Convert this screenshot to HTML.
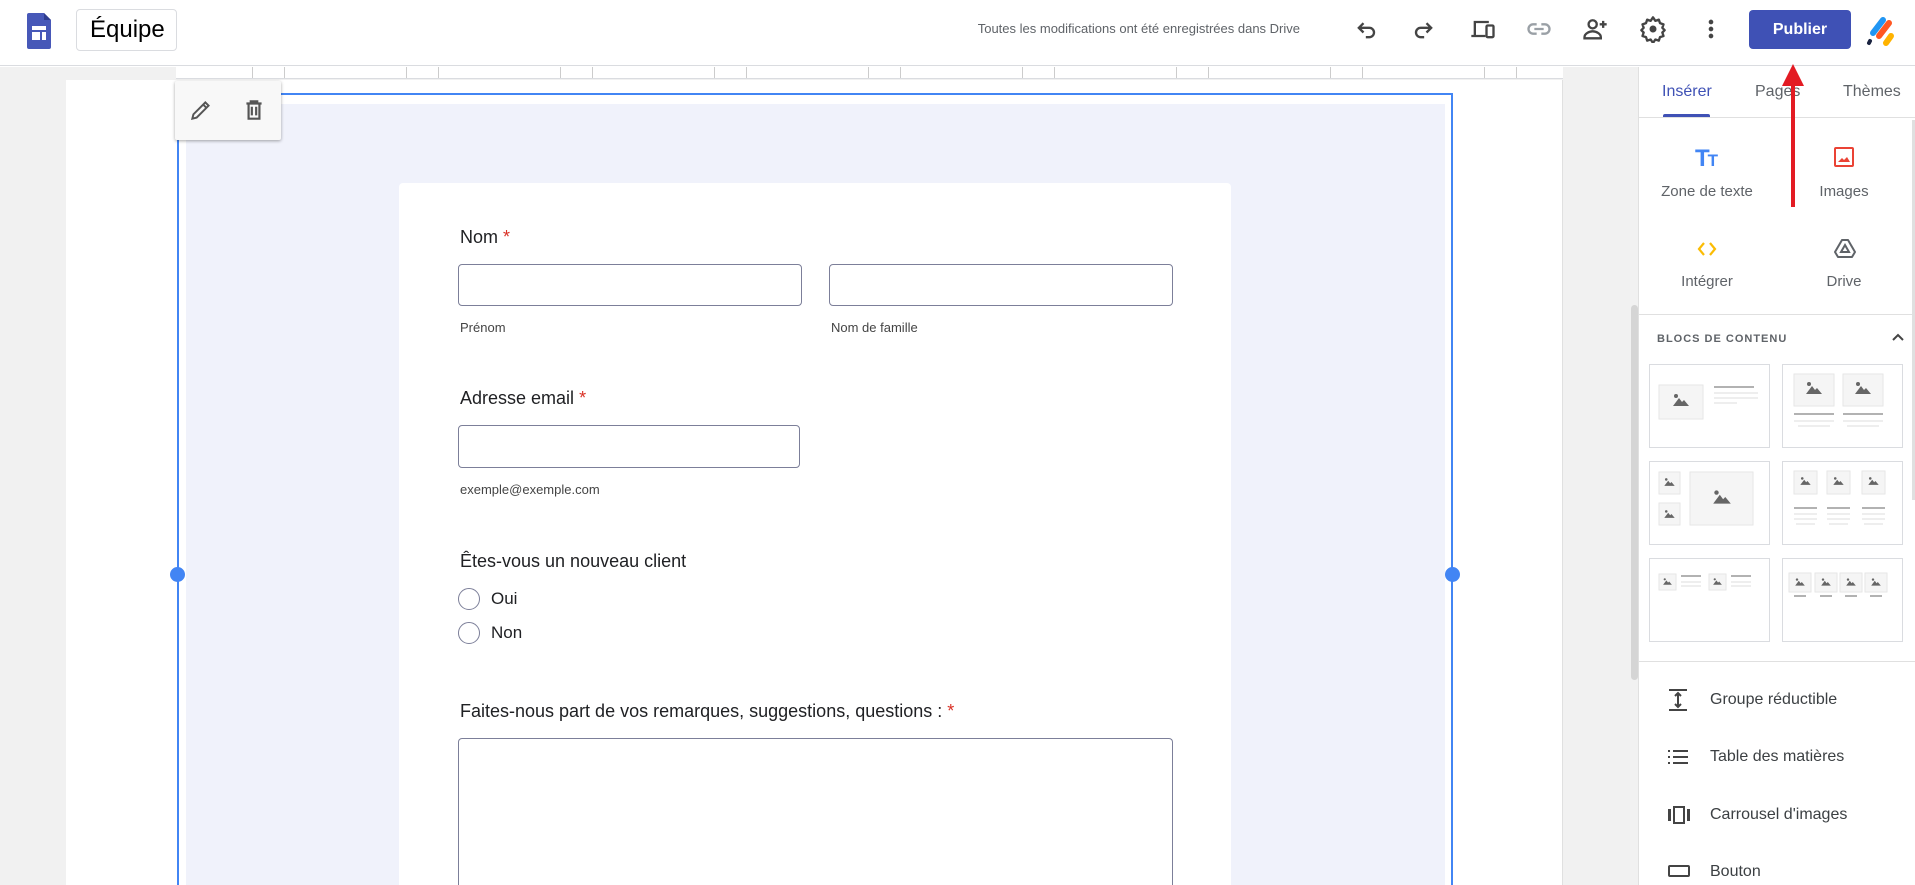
<!DOCTYPE html>
<html><head><meta charset="utf-8"><style>
*{margin:0;padding:0;box-sizing:border-box}
html,body{width:1915px;height:885px;overflow:hidden}
body{background:#fff;font-family:"Liberation Sans",Arial,sans-serif;position:relative}
.a{position:absolute}
.lbl{position:absolute;font-size:18px;color:#202124;white-space:nowrap}
.req{color:#d93025}
.inp{position:absolute;border:1px solid #7c7f99;border-radius:4px;background:#fff}
.sub{position:absolute;font-size:13px;color:#444;white-space:nowrap}
.ic{position:absolute;width:28px;height:28px}
.tab{position:absolute;top:83px;font-size:16px;color:#5f6368}
.card{position:absolute;border:1px solid #dadce0;background:#fff}
.it{position:absolute;left:1710px;font-size:16px;color:#3c4043;white-space:nowrap}
.ins{position:absolute;font-size:15px;color:#5f6368;white-space:nowrap;transform:translateX(-50%)}
</style></head><body>
<!-- header -->
<div class="a" style="left:0;top:0;width:1915px;height:66px;background:#fff;border-bottom:1px solid #dadce0"></div>
<svg class="a" style="left:27px;top:13px" width="24" height="36" viewBox="0 0 24 36"><path d="M2 0h15l7 7v27a2 2 0 0 1-2 2H2a2 2 0 0 1-2-2V2a2 2 0 0 1 2-2z" fill="#4758b8"/><path d="M17 0l7 7h-7z" fill="#2f3d8f"/><rect x="5" y="13" width="14" height="4" fill="#fff"/><rect x="5" y="19" width="8" height="8" fill="#fff"/><rect x="15" y="19" width="4" height="8" fill="#fff"/></svg>
<div class="a" style="left:76px;top:9px;width:101px;height:42px;border:1px solid #dadce0;border-radius:4px;font-size:24px;line-height:40px;padding-left:13px;color:#000">Équipe</div>
<div class="a" style="left:960px;top:21px;width:340px;text-align:right;font-size:13px;color:#5f6368">Toutes les modifications ont été enregistrées dans Drive</div>
<svg class="ic" style="left:1353px;top:15px" viewBox="0 0 24 24"><path d="M9 7L5 11l4 4M5 11h9a4 4 0 0 1 0 8h-3" fill="none" stroke="#444" stroke-width="2"/></svg>
<svg class="ic" style="left:1409px;top:15px" viewBox="0 0 24 24"><path d="M15 7l4 4-4 4M19 11h-9a4 4 0 0 0 0 8h3" fill="none" stroke="#444" stroke-width="2"/></svg>
<svg class="ic" style="left:1469px;top:15px" viewBox="0 0 24 24"><path d="M4 5h13v2H6v10H4z M2 17h12v2H2z" fill="#444"/><rect x="15" y="9" width="6" height="10" rx="1" fill="none" stroke="#444" stroke-width="2"/></svg>
<svg class="ic" style="left:1525px;top:15px" viewBox="0 0 24 24"><path d="M10 8H7a4 4 0 0 0 0 8h3M14 8h3a4 4 0 0 1 0 8h-3M8 12h8" fill="none" stroke="#9aa0a6" stroke-width="2"/></svg>
<svg class="ic" style="left:1581px;top:15px" viewBox="0 0 24 24"><circle cx="10" cy="8" r="3.5" fill="none" stroke="#444" stroke-width="2"/><path d="M3 20v-1c0-3 4-5 7-5s7 2 7 5v1z" fill="none" stroke="#444" stroke-width="2"/><path d="M19 5v6M16 8h6" stroke="#444" stroke-width="2"/></svg>
<svg class="ic" style="left:1639px;top:15px" viewBox="0 0 24 24"><path d="M12 2l2 3 3-1 1 3 3 1-1 3 2 2-2 2 1 3-3 1-1 3-3-1-2 3-2-3-3 1-1-3-3-1 1-3-2-2 2-2-1-3 3-1 1-3 3 1z" fill="none" stroke="#444" stroke-width="2" stroke-linejoin="round"/><circle cx="12" cy="12" r="3" fill="#444"/></svg>
<svg class="ic" style="left:1697px;top:15px" viewBox="0 0 24 24"><circle cx="12" cy="6" r="2" fill="#444"/><circle cx="12" cy="12" r="2" fill="#444"/><circle cx="12" cy="18" r="2" fill="#444"/></svg>
<div class="a" style="left:1749px;top:10px;width:102px;height:39px;background:#3f51b5;border-radius:4px;color:#fff;font-weight:bold;font-size:16px;line-height:39px;text-align:center">Publier</div>
<svg class="a" style="left:1862px;top:14px" width="34" height="34" viewBox="0 0 34 34"><path d="M11 19L21 6" stroke="#2196f3" stroke-width="6" stroke-linecap="round"/><path d="M17 22L27 9" stroke="#ff5722" stroke-width="6" stroke-linecap="round"/><path d="M24 29L29 22" stroke="#ffb300" stroke-width="6" stroke-linecap="round"/><path d="M7 29L8 27" stroke="#1a2340" stroke-width="4" stroke-linecap="round"/></svg>
<!-- canvas -->
<div class="a" style="left:0;top:67px;width:1638px;height:818px;background:#f1f1f1"></div>
<div class="a" style="left:176px;top:67px;width:1387px;height:12px;background:#fff;border-bottom:1px solid #dadce0;background-image:repeating-linear-gradient(90deg,transparent 0,transparent 76px,#ccc 76px,#ccc 77px,transparent 77px,transparent 108px,#ccc 108px,#ccc 109px,transparent 109px,transparent 154px);"></div>
<div class="a" style="left:66px;top:80px;width:1497px;height:805px;background:#fff;border-right:1px solid #e0e0e0"></div>
<div class="a" style="left:177px;top:93px;width:1276px;height:792px;border:2px solid #4285f4;border-bottom:none"></div>
<div class="a" style="left:186px;top:104px;width:1259px;height:781px;background:#f0f2fb"></div>
<div class="a" style="left:175px;top:81px;width:106px;height:59px;background:#f8f8f8;box-shadow:0 1px 3px rgba(0,0,0,.35);border-radius:2px"></div>
<svg class="a" style="left:188px;top:97px" width="26" height="26" viewBox="0 0 24 24"><path d="M4 20l1-4L16 5l3 3L8 19z M14 7l3 3" fill="none" stroke="#555" stroke-width="1.8"/></svg>
<svg class="a" style="left:241px;top:97px" width="26" height="26" viewBox="0 0 24 24"><path d="M5 6h14M9 6V4h6v2M7 6v14h10V6M10 9v8M14 9v8" fill="none" stroke="#555" stroke-width="2"/></svg>
<div class="a" style="left:170px;top:567px;width:15px;height:15px;border-radius:50%;background:#4285f4"></div>
<div class="a" style="left:1445px;top:567px;width:15px;height:15px;border-radius:50%;background:#4285f4"></div>
<!-- form -->
<div class="a" style="left:399px;top:183px;width:832px;height:702px;background:#fff;border-radius:4px 4px 0 0"></div>
<div class="lbl" style="left:460px;top:227px">Nom <span class="req">*</span></div>
<div class="inp" style="left:458px;top:264px;width:344px;height:42px"></div>
<div class="inp" style="left:829px;top:264px;width:344px;height:42px"></div>
<div class="sub" style="left:460px;top:320px">Prénom</div>
<div class="sub" style="left:831px;top:320px">Nom de famille</div>
<div class="lbl" style="left:460px;top:388px">Adresse email <span class="req">*</span></div>
<div class="inp" style="left:458px;top:425px;width:342px;height:43px"></div>
<div class="sub" style="left:460px;top:482px">exemple@exemple.com</div>
<div class="lbl" style="left:460px;top:551px">Êtes-vous un nouveau client</div>
<div class="a" style="left:458px;top:588px;width:22px;height:22px;border:1.5px solid #7c7f99;border-radius:50%"></div>
<div class="lbl" style="left:491px;top:589px;font-size:17px">Oui</div>
<div class="a" style="left:458px;top:622px;width:22px;height:22px;border:1.5px solid #7c7f99;border-radius:50%"></div>
<div class="lbl" style="left:491px;top:623px;font-size:17px">Non</div>
<div class="lbl" style="left:460px;top:701px">Faites-nous part de vos remarques, suggestions, questions : <span class="req">*</span></div>
<div class="inp" style="left:458px;top:738px;width:715px;height:147px;border-bottom:none;border-radius:4px 4px 0 0"></div>
<!-- panel -->
<div class="a" style="left:1631px;top:305px;width:7px;height:375px;background:#d5d5d5;border-radius:4px"></div>
<div class="a" style="left:1638px;top:67px;width:277px;height:818px;background:#fff;border-left:1px solid #e0e0e0"></div>
<div class="tab" style="left:1662px;color:#3f51b5">Insérer</div>
<div class="tab" style="left:1755px">Pages</div>
<div class="tab" style="left:1843px">Thèmes</div>
<div class="a" style="left:1663px;top:114px;width:47px;height:3px;background:#3f51b5;border-radius:2px 2px 0 0"></div>
<div class="a" style="left:1638px;top:117px;width:277px;height:1px;background:#e0e0e0"></div>
<div class="a" style="left:1912px;top:120px;width:3px;height:380px;background:#e0e0e0"></div>
<div class="a" style="left:1695px;top:145px;font-size:24px;font-weight:bold;color:#4285f4;letter-spacing:-2px">T<span style="font-size:17px">T</span></div>
<svg class="a" style="left:1833px;top:146px" width="22" height="22" viewBox="0 0 22 22"><rect x="2" y="2" width="18" height="18" rx="1" fill="none" stroke="#ea4335" stroke-width="2"/><path d="M5 16l4-4 2 2 3-3 3 5z" fill="#ea4335"/></svg>
<div class="ins" style="left:1707px;top:183px">Zone de texte</div>
<div class="ins" style="left:1844px;top:183px">Images</div>
<svg class="a" style="left:1696px;top:238px" width="22" height="22" viewBox="0 0 22 22"><path d="M8 5L3 11l5 6M14 5l5 6-5 6" fill="none" stroke="#fbbc04" stroke-width="2.2"/></svg>
<svg class="a" style="left:1833px;top:237px" width="24" height="24" viewBox="0 0 24 24"><path d="M9 3h6l7 12-3 5H5l-3-5z" fill="none" stroke="#5f6368" stroke-width="2" stroke-linejoin="round"/><path d="M12 8l4 7H8z" fill="none" stroke="#5f6368" stroke-width="2"/></svg>
<div class="ins" style="left:1707px;top:273px">Intégrer</div>
<div class="ins" style="left:1844px;top:273px">Drive</div>
<div class="a" style="left:1638px;top:314px;width:277px;height:1px;background:#e0e0e0"></div>
<div class="a" style="left:1657px;top:333px;font-size:11px;letter-spacing:1px;color:#5f6368;font-weight:bold">BLOCS DE CONTENU</div>
<svg class="a" style="left:1891px;top:332px" width="14" height="10" viewBox="0 0 14 10"><path d="M2 8l5-5 5 5" fill="none" stroke="#444" stroke-width="2"/></svg>
<div class="card" style="left:1649px;top:364px;width:121px;height:84px"></div>
<div class="card" style="left:1782px;top:364px;width:121px;height:84px"></div>
<div class="card" style="left:1649px;top:461px;width:121px;height:84px"></div>
<div class="card" style="left:1782px;top:461px;width:121px;height:84px"></div>
<div class="card" style="left:1649px;top:558px;width:121px;height:84px"></div>
<div class="card" style="left:1782px;top:558px;width:121px;height:84px"></div>
<svg class="a" style="left:1649px;top:364px" width="254" height="278" viewBox="0 0 254 278">
<defs><symbol id="m" viewBox="0 0 20 14"><circle cx="5" cy="3" r="2" fill="#666"/><path d="M2 13l6-8 3 4 2-2 5 6z" fill="#666"/></symbol></defs>
<g fill="#f5f5f5" stroke="#e6e6e6">
<rect x="10" y="21" width="44" height="34"/>
<rect x="145" y="10" width="40" height="32"/><rect x="194" y="10" width="40" height="32"/>
<rect x="10" y="108" width="21" height="22"/><rect x="10" y="139" width="21" height="22"/><rect x="41" y="108" width="63" height="53"/>
<rect x="145" y="107" width="23" height="23"/><rect x="178" y="107" width="23" height="23"/><rect x="213" y="107" width="23" height="23"/>
<rect x="10" y="210" width="17" height="16"/><rect x="60" y="210" width="17" height="16"/>
<rect x="140" y="209" width="22" height="19"/><rect x="166" y="209" width="22" height="19"/><rect x="191" y="209" width="22" height="19"/><rect x="216" y="209" width="22" height="19"/>
</g>
<use href="#m" x="22" y="29" width="20" height="14"/>
<use href="#m" x="155" y="17" width="20" height="14"/><use href="#m" x="204" y="17" width="20" height="14"/>
<use href="#m" x="14" y="113" width="13" height="10"/><use href="#m" x="14" y="145" width="13" height="10"/><use href="#m" x="62" y="125" width="22" height="16"/>
<use href="#m" x="150" y="112" width="13" height="10"/><use href="#m" x="183" y="112" width="13" height="10"/><use href="#m" x="218" y="112" width="13" height="10"/>
<use href="#m" x="13" y="213" width="11" height="9"/><use href="#m" x="63" y="213" width="11" height="9"/>
<use href="#m" x="145" y="213" width="12" height="10"/><use href="#m" x="171" y="213" width="12" height="10"/><use href="#m" x="196" y="213" width="12" height="10"/><use href="#m" x="221" y="213" width="12" height="10"/>
<g stroke="#999" stroke-width="1.5"><path d="M65 23h40M145 50h40M194 50h40M145 144h23M178 144h23M213 144h23M32 212h20M82 212h20M145 232h12M171 232h12M196 232h12M221 232h12"/></g>
<g stroke="#ddd" stroke-width="1"><path d="M65 29h44M65 34h44M65 39h23M145 57h40M149 62h32M194 57h40M198 62h32M145 150h23M145 155h23M147 160h19M178 150h23M178 155h23M180 160h19M213 150h23M213 155h23M215 160h19M32 218h20M32 222h20M82 218h20M82 222h20"/></g>
</svg>
<div class="a" style="left:1638px;top:661px;width:277px;height:1px;background:#e0e0e0"></div>
<svg class="a" style="left:1667px;top:688px" width="22" height="24" viewBox="0 0 22 24"><path d="M2 2h18M2 22h18M11 5v14M8 8l3-3 3 3M8 16l3 3 3-3" fill="none" stroke="#444" stroke-width="2"/></svg>
<div class="it" style="top:691px">Groupe réductible</div>
<svg class="a" style="left:1667px;top:747px" width="22" height="20" viewBox="0 0 22 20"><path d="M1 4h2M1 10h2M1 16h2M6 4h15M6 10h15M6 16h15" stroke="#444" stroke-width="2"/></svg>
<div class="it" style="top:748px">Table des matières</div>
<svg class="a" style="left:1667px;top:805px" width="24" height="20" viewBox="0 0 24 20"><rect x="1" y="4" width="3" height="12" fill="#444"/><rect x="20" y="4" width="3" height="12" fill="#444"/><rect x="7" y="2" width="10" height="16" fill="none" stroke="#444" stroke-width="2"/></svg>
<div class="it" style="top:806px">Carrousel d'images</div>
<svg class="a" style="left:1667px;top:863px" width="24" height="16" viewBox="0 0 24 16"><rect x="2" y="3" width="20" height="10" rx="1" fill="none" stroke="#444" stroke-width="2"/></svg>
<div class="it" style="top:863px">Bouton</div>
<!-- arrow (on top) -->
<svg class="a" style="left:1780px;top:60px;z-index:10" width="26" height="150" viewBox="0 0 26 150"><path d="M13 22V147" stroke="#e31b23" stroke-width="4"/><path d="M2 26L13 4 24 26z" fill="#e31b23"/></svg>
</body></html>
